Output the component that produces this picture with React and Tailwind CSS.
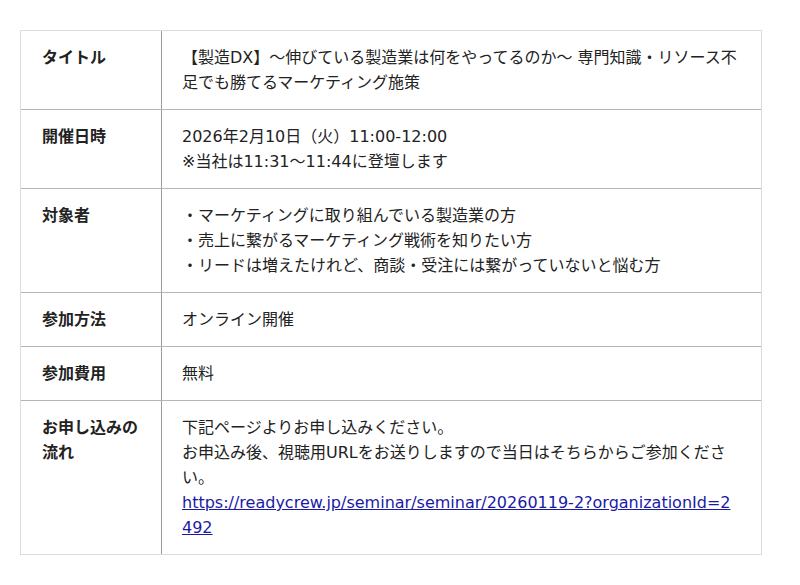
export default function App() {
  const rows = [
    {
      label: "タイトル",
      content: (
        <>
          【製造DX】〜伸びている製造業は何をやってるのか〜 専門知識・リソース不足でも勝てるマーケティング施策
        </>
      ),
    },
    {
      label: "開催日時",
      content: (
        <>
          2026年2月10日（火）11:00-12:00
          <br />
          ※当社は11:31〜11:44に登壇します
        </>
      ),
    },
    {
      label: "対象者",
      content: (
        <>
          ・マーケティングに取り組んでいる製造業の方
          <br />
          ・売上に繋がるマーケティング戦術を知りたい方
          <br />
          ・リードは増えたけれど、商談・受注には繋がっていないと悩む方
        </>
      ),
    },
    { label: "参加方法", content: <>オンライン開催</> },
    { label: "参加費用", content: <>無料</> },
    {
      label: "お申し込みの流れ",
      content: (
        <>
          下記ページよりお申し込みください。
          <br />
          お申込み後、視聴用URLをお送りしますので当日はそちらからご参加ください。
          <br />
          <a href="#" className="text-[#1a1aa6] underline break-all">
            https://readycrew.jp/seminar/seminar/20260119-2?organizationId=2492
          </a>
        </>
      ),
    },
  ];
  return (
    <div
      className="bg-white w-[800px] h-[585px] pt-[30px] px-[20px] text-[#222] text-[16px] leading-[25px]"
      style={{ fontFamily: '"DejaVu Sans", "Noto Sans CJK JP", sans-serif' }}
    >
      <div className="w-[742px] border-t border-l border-r border-[#dcdcdc]">
        {rows.map((r, i) => (
          <div
            key={i}
            className={
              "grid grid-cols-[141px_1fr] border-b " +
              (i === rows.length - 1 ? "border-[#dcdcdc]" : "border-[#b4b4b4]")
            }
          >
            <div className="pl-[21px] pr-[19px] py-[14px] font-bold text-[16px] border-r border-[#9a9a9a]">
              {r.label}
            </div>
            <div className="pl-[20px] pr-[22px] py-[14px]">{r.content}</div>
          </div>
        ))}
      </div>
    </div>
  );
}
